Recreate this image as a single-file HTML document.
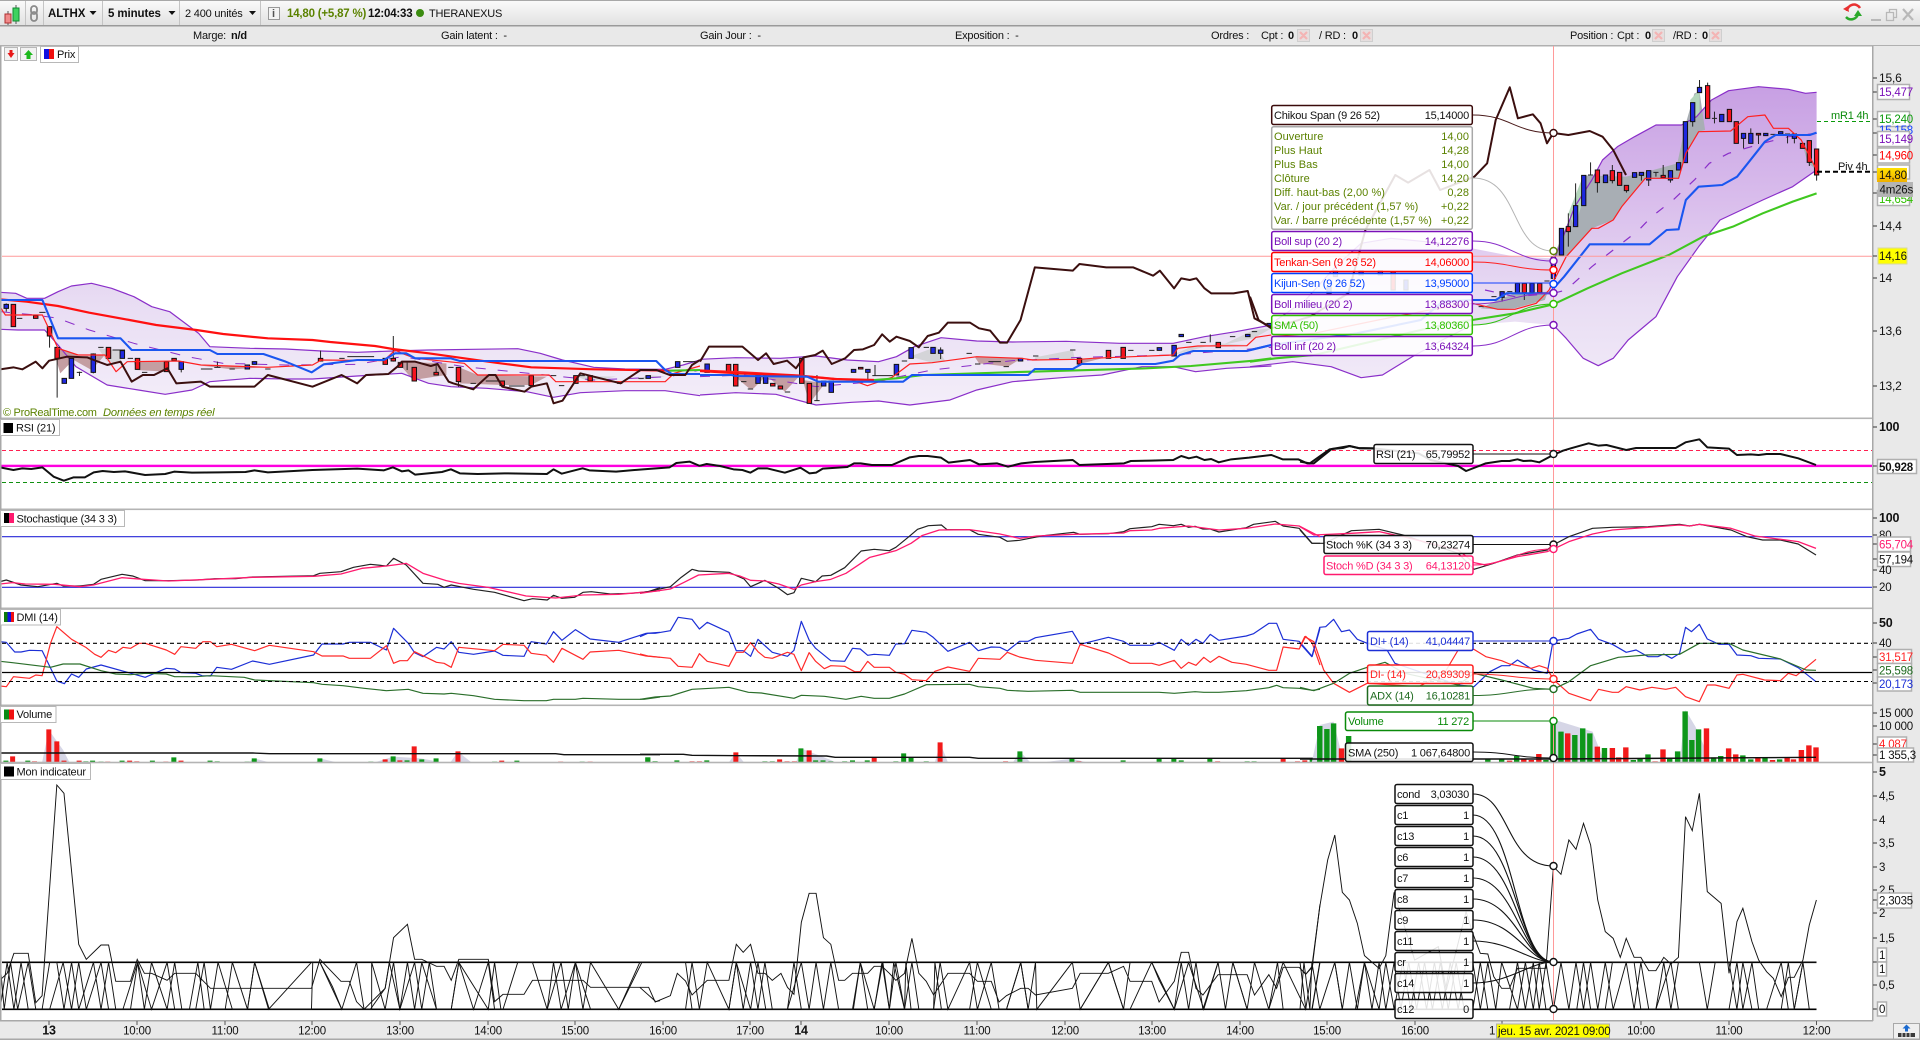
<!DOCTYPE html>
<html lang="fr"><head><meta charset="utf-8"><title>ProRealTime ALTHX</title>
<style>
html,body{margin:0;padding:0;background:#fff;width:1920px;height:1040px;overflow:hidden}
svg{display:block}
text{font:11px "Liberation Sans",Arial,sans-serif;fill:#111;letter-spacing:-.2px;dominant-baseline:auto}
.b{font-weight:bold}
.e{text-anchor:end}
.n *{vector-effect:non-scaling-stroke}
.l{fill:none;stroke-linejoin:round}
.box{fill:#fff;fill-opacity:.88;stroke-width:1.5}
.ax{fill:#fff;stroke:#b0b0b0;stroke-width:1.5}
.c{fill:#fff;stroke-width:1.4}
.k{stroke:#222;stroke-width:1;fill:none}
.r{fill:#f5141e;stroke:#111;stroke-width:1}
.u{fill:#1f28e0;stroke:#111;stroke-width:1}
.sep{fill:#b4b4b4}
.hd{fill:#fff;stroke:#b8b8b8}
.zz{fill:none;stroke:#111;stroke-width:.95;stroke-linejoin:miter}
.i{fill:#5b8200;letter-spacing:.05px}
</style></head><body>
<svg width="1920" height="1040" viewBox="0 0 1920 1040" xmlns="http://www.w3.org/2000/svg">
<defs>
<linearGradient id="tb" x1="0" y1="0" x2="0" y2="1"><stop offset="0" stop-color="#fbfbfb"/><stop offset="1" stop-color="#e2e2e2"/></linearGradient>
<linearGradient id="gold" x1="0" y1="0" x2="0" y2="1"><stop offset="0" stop-color="#ffe000"/><stop offset="1" stop-color="#f0b000"/></linearGradient>
<linearGradient id="g3" gradientUnits="userSpaceOnUse" x1="0" y1="-555" x2="0" y2="390"><stop offset="0" stop-color="#c79fe3"/><stop offset=".365" stop-color="#d9bdec"/><stop offset=".68" stop-color="#e8dcf3"/><stop offset="1" stop-color="#f3edf9"/></linearGradient>
<linearGradient id="g4" gradientUnits="userSpaceOnUse" x1="0" y1="-465" x2="0" y2="480"><stop offset="0" stop-color="#c79fe3"/><stop offset=".365" stop-color="#d9bdec"/><stop offset=".68" stop-color="#e8dcf3"/><stop offset="1" stop-color="#f3edf9"/></linearGradient>
<linearGradient id="g2" gradientUnits="userSpaceOnUse" x1="0" y1="255" x2="0" y2="1200"><stop offset="0" stop-color="#c79fe3"/><stop offset=".365" stop-color="#d9bdec"/><stop offset=".68" stop-color="#e8dcf3"/><stop offset="1" stop-color="#f3edf9"/></linearGradient>
</defs>
<rect width="1920" height="1040" fill="#fff"/>

<!-- toolbar -->
<rect x="0" y="0" width="1920" height="25" fill="url(#tb)"/>
<rect x="0" y="0" width="1920" height="1" fill="#a8a8a8"/>
<rect x="0" y="25" width="1920" height="1.5" fill="#9a9a9a"/>
<rect x="0" y="26.5" width="1920" height="19" fill="#e9e9e9"/>
<rect x="0" y="45" width="1920" height="1.5" fill="#b0b0b0"/>
<path d="M25.5 1V25M43.5 1V25M102.5 1V25M179.5 1V25M260.5 1V25" stroke="#c4c4c4" fill="none"/>
<path d="M8 12V26M16 6V25" stroke="#555" stroke-width="1" transform="translate(0,-1)"/>
<rect x="5" y="14" width="6" height="9" fill="#f08a8a" stroke="#b03030"/>
<rect x="13" y="8" width="6" height="13" fill="#3fd25f" stroke="#108a30"/>
<g fill="none" stroke="#8a8a8a" stroke-width="1.8"><rect x="31" y="6" width="6" height="8" rx="3"/><rect x="31" y="12" width="6" height="9" rx="3"/></g>
<text x="48" y="17" class="b" style="font-size:11.5px;letter-spacing:0">ALTHX</text>
<path d="M89.5 11h7l-3.500 4z" fill="#111"/>
<text x="108" y="17" class="b" style="font-size:11.5px;letter-spacing:-.1px">5 minutes</text>
<path d="M168.5 11h7l-3.500 4z" fill="#111"/>
<text x="185" y="17" style="font-size:11px">2 400 unités</text>
<path d="M249 11h7l-3.500 4z" fill="#111"/>
<rect x="268.5" y="7.5" width="11" height="12" fill="#f4f4f4" stroke="#999"/>
<text x="272" y="17" style="fill:#555;font-weight:bold">i</text>
<text x="287" y="17" class="b" style="fill:#5b8200;font-size:11.5px">14,80 (+5,87 %)</text>
<text x="368" y="17" class="b" style="font-size:11.5px">12:04:33</text>
<circle cx="420" cy="13" r="4" fill="#3c8c10"/>
<text x="429" y="17" style="font-size:11px">THERANEXUS</text>

<!-- window controls -->
<path d="M1860 8A7 7 0 0 0 1847 11" fill="none" stroke="#e83030" stroke-width="2.5"/><path d="M1843 9l5 -3l1 6z" fill="#e83030"/>
<path d="M1846 17A7 7 0 0 0 1858 14" fill="none" stroke="#2aa82a" stroke-width="2.5"/><path d="M1854 16l4 -6l4 6z" fill="#2aa82a"/>
<path d="M1871 20h10" stroke="#b8b8b8" stroke-width="2"/>
<path d="M1886.5 12.500h7v8h-7zM1889.500 12.500v-3h7v8h-3" fill="none" stroke="#b8b8b8" stroke-width="1.3"/>
<path d="M1903 9l10 11M1913 9l-10 11" stroke="#b8b8b8" stroke-width="2.2"/>

<!-- row 2 -->
<g>
<text x="193" y="39">Marge:</text><text x="231" y="39" class="b">n/d</text>
<text x="441" y="39">Gain latent :&#160; -</text>
<text x="700" y="39">Gain Jour :&#160; -</text>
<text x="955" y="39">Exposition :&#160; -</text>
<text x="1211" y="39">Ordres :</text>
<text x="1261" y="39">Cpt :</text><text x="1288" y="39" class="b">0</text>
<text x="1319" y="39">/ RD :</text><text x="1352" y="39" class="b">0</text>
<text x="1570" y="39">Position :</text>
<text x="1617" y="39">Cpt :</text><text x="1645" y="39" class="b">0</text>
<text x="1673" y="39">/RD :</text><text x="1702" y="39" class="b">0</text>
</g>
<g fill="#e6dede" stroke="#cfcfcf">
<rect x="1297.5" y="29.5" width="12" height="12"/><rect x="1360.5" y="29.5" width="12" height="12"/><rect x="1652.5" y="29.5" width="12" height="12"/><rect x="1709.5" y="29.5" width="12" height="12"/>
</g>
<path d="M1300 32l7 7M1307 32l-7 7M1363 32l7 7M1370 32l-7 7M1655 32l7 7M1662 32l-7 7M1712 32l7 7M1719 32l-7 7" stroke="#f4b4b4" stroke-width="2.2"/>

<!-- pane horizontal lines -->
<path d="M2 450.5H1872" stroke="#ff2050" stroke-dasharray="4 3" fill="none"/>
<path d="M2 482.5H1872" stroke="#109010" stroke-dasharray="4 3" fill="none"/>

<!-- ============ PRICE PANE ============ -->
<g class="n">
<!-- z3 -->
<g transform="translate(0 270) scale(.44643 .33333)">
<polygon fill="url(#g3)" points="0,67 35,70 60,85 100,85 130,65 160,48 205,40 250,55 300,80 340,110 380,125 420,165 445,190 470,230 560,235 640,237 720,243 800,247 880,243 960,240 1060,238 1160,236 1210,250 1260,270 1330,292 1400,297 1490,298 1530,285 1568,270 1568,377 1490,362 1400,362 1300,368 1240,382 1180,365 1090,355 1010,350 960,340 900,310 800,318 700,327 640,327 560,325 470,335 430,360 370,373 310,360 240,345 170,290 130,225 100,180 40,180 0,178"/>
<g fill="#c49ea2"><polygon points="130,235 175,255 135,310 125,265"/><polygon points="155,262 235,255 205,300 185,285"/><polygon points="300,275 375,275 370,305 305,300"/><polygon points="890,275 1000,280 1000,315 925,330"/><polygon points="1025,290 1070,315 1225,320 1190,345 1125,345 1030,340"/><polygon points="450,287 590,292 520,298"/></g>
<g fill="#d4d4d8"><polygon points="220,235 270,242 270,280 240,275"/><polygon points="1290,318 1380,320 1320,335"/><polygon points="1450,315 1490,320 1430,330"/></g>
<polyline class="l" stroke="#8a2fc9" stroke-width="1.2" points="0,67 35,70 60,85 100,85 130,65 160,48 205,40 250,55 300,80 340,110 380,125 420,165 445,190 470,230 560,235 640,237 720,243 800,247 880,243 960,240 1060,238 1160,236 1210,250 1260,270 1330,292 1400,297 1490,298 1530,285 1568,270"/>
<polyline class="l" stroke="#8a2fc9" stroke-width="1.2" points="0,178 40,180 100,180 130,225 170,290 240,345 310,360 370,373 430,360 470,335 560,325 640,327 700,327 800,318 900,310 960,340 1010,350 1090,355 1180,365 1240,382 1300,368 1400,362 1490,362 1568,377"/>
<polyline class="l" stroke="#8a2fc9" stroke-width="1" stroke-dasharray="10 12" points="0,125 80,135 130,145 200,180 300,220 420,260 500,280 640,285 800,283 900,260 1040,290 1200,312 1330,330 1500,320 1568,300"/>
<path class="k" d="M14 100V125M30 103V170M111 170V233M128 232V383M178 305V318M209 250V310M406 275V307M487 275V292M718 242V275M881 198V275M912 278V300M977 283V315M1027 292V350M1190 317V350M1125 333V350M38 145h12M88 127h14M172 307h12M220 232h12M252 240h28M286 265h12M318 307h12M450 297h26M480 292h14M514 297h12M594 297h12M760 265h12M778 260h60M1004 292h12M1054 340h12M1088 333h28M1140 348h35M1234 317h12M1252 347h12M1298 317h12M1382 340h12M1430 325h12M1530 275h28"/>
<path class="r" d="M25 103h10V170h-10zM75 137h10V145h-10zM106 170h10V198h-10zM123 232h10V265h-10zM238 232h10V265h-10zM303 265h10V298h-10zM368 275h10V305h-10zM385 265h10V272h-10zM713 265h10V273h-10zM858 265h10V283h-10zM876 265h10V273h-10zM892 278h10V292h-10zM923 292h10V333h-10zM972 307h10V315h-10zM1022 292h10V335h-10zM1120 333h10V347h-10zM1185 317h10V347h-10zM1285 317h10V340h-10zM1317 317h10V333h-10z"/>
<path class="u" d="M9 103h10V115h-10zM139 325h10V340h-10zM155 265h10V325h-10zM204 252h10V307h-10zM269 242h10V265h-10zM401 275h10V298h-10zM549 285h10V297h-10zM565 275h10V283h-10zM1447 317h10V325h-10zM1513 275h10V292h-10z"/>
<polyline class="l" stroke="#ff2020" stroke-width="1.2" points="0,110 12,135 95,135 130,235 175,255 235,255 260,305 285,275 400,273 450,285 600,292 700,285 720,270 860,272 885,240 900,250 930,265 1040,280 1070,315 1230,315 1245,335 1490,335 1510,310 1568,288"/>
<polyline class="l" stroke="#ff1010" stroke-width="2.2" points="0,88 60,95 130,108 200,128 290,150 350,165 440,180 500,192 600,205 700,210 740,216 840,228 880,237 960,250 1040,265 1110,278 1190,292 1330,298 1500,302"/>
<polyline class="l" stroke="#40c820" stroke-width="2.1" points="1500,302 1568,300"/>
<polyline class="l" stroke="#1a56f0" stroke-width="2.1" points="0,90 95,90 130,205 270,205 295,240 470,240 487,252 590,252 640,275 698,307 725,283 800,270 860,270 885,250 910,250 930,265 1010,265 1030,273 1470,273 1490,300 1505,312 1568,312"/>
<polyline class="l" stroke="#3b0f0f" stroke-width="2" points="0,298 30,292 50,298 80,275 95,295 110,272 150,260 195,262 210,270 240,285 270,275 295,335 320,315 345,315 375,295 395,340 450,335 470,350 570,350 600,315 700,350 765,315 800,340 820,315 870,312 890,290 900,275 930,275 965,288 980,282 1005,335 1015,340 1060,358 1095,315 1110,315 1125,350 1175,365 1190,350 1225,340 1240,400 1260,392 1300,310 1390,340 1435,300 1470,300 1500,315 1535,315 1550,285 1568,270"/>
</g>
<!-- z4 -->
<g transform="translate(700 240) scale(.44643 .33333)">
<polygon fill="url(#g4)" points="0,358 80,353 180,355 260,348 330,360 400,365 440,350 480,320 540,293 620,303 700,306 820,304 940,310 1060,310 1130,290 1200,275 1280,255 1280,378 1180,385 1110,395 1060,380 990,380 900,405 820,412 700,425 620,450 560,480 470,495 400,483 340,487 260,495 170,463 80,458 0,465"/>
<g fill="#c49ea2"><polygon points="70,400 150,405 120,445 110,445"/><polygon points="150,408 225,405 190,455"/><polygon points="230,420 280,430 245,490"/><polygon points="615,350 720,355 690,380 625,370"/><polygon points="850,358 900,355 850,372"/></g>
<g fill="#d4d4d8"><polygon points="470,350 530,320 550,365 520,368"/><polygon points="750,352 835,330 840,358 750,360"/><polygon points="1060,345 1160,310 1225,315 1100,320"/><polygon points="1170,315 1240,270 1280,265 1240,295"/></g>
<polyline class="l" stroke="#8a2fc9" stroke-width="1.2" points="0,358 80,353 180,355 260,348 330,360 400,365 440,350 480,320 540,293 620,303 700,306 820,304 940,310 1060,310 1130,290 1200,275 1280,255"/>
<polyline class="l" stroke="#8a2fc9" stroke-width="1.2" points="0,465 80,458 170,463 260,495 340,487 400,483 470,495 560,480 620,450 700,425 820,412 900,405 990,380 1060,380 1110,395 1180,385 1280,378"/>
<polyline class="l" stroke="#8a2fc9" stroke-width="1" stroke-dasharray="10 12" points="0,410 100,405 260,440 390,425 520,390 700,362 850,352 1060,345 1280,322"/>
<path class="k" d="M80 373V438M245 430V490M262 405V482M539 322V357M376 388V420M392 375V407M1143 283V307M228 355V430M473 323V355M1062 316V348M92 425h12M107 447h12M190 456h12M256 482h12M386 407h46M452 363h12M501 322h12M597 340h12M616 372h12M646 365h28M680 380h12M746 348h12M829 330h12M959 331h12M1006 331h12M1089 307h12M1121 307h12M1187 290h12M1236 275h12"/>
<path class="r" d="M59 373h10V397h-10zM75 373h10V438h-10zM158 430h10V438h-10zM175 438h10V447h-10zM223 355h10V430h-10zM240 430h10V490h-10zM355 382h10V387h-10zM845 355h10V372h-10zM910 331h10V355h-10zM943 322h10V355h-10zM1156 307h10V323h-10z"/>
<path class="u" d="M11 372h10V397h-10zM125 407h10V430h-10zM142 407h10V430h-10zM272 423h10V438h-10zM289 423h10V457h-10zM339 388h10V397h-10zM371 388h10V397h-10zM435 373h10V405h-10zM468 323h10V355h-10zM517 322h10V340h-10zM534 330h10V340h-10zM713 355h10V363h-10zM1024 323h10V331h-10zM1057 316h10V348h-10zM1073 283h10V290h-10zM1222 283h10V290h-10zM1270 250h10V258h-10z"/>
<polyline class="l" stroke="#ff2020" stroke-width="1.2" points="0,390 90,395 220,405 340,420 375,437 430,412 470,372 520,368 620,350 720,355 745,360 850,358 880,355 1060,345 1070,325 1115,318 1225,317 1245,292 1280,285"/>
<polyline class="l" stroke="#ff1010" stroke-width="2.2" points="0,393 60,398 130,402 220,407 300,417 390,420"/>
<polyline class="l" stroke="#40c820" stroke-width="2.1" points="390,420 440,415 500,405 740,395 1000,385 1100,378 1240,362 1280,355"/>
<polyline class="l" stroke="#1a56f0" stroke-width="2.1" points="0,405 70,405 80,408 240,410 265,425 455,425 475,405 735,405 750,387 835,387 855,372 1020,372 1060,362 1075,345 1105,333 1225,333 1280,315"/>
<polyline class="l" stroke="#3b0f0f" stroke-width="2" points="0,365 20,320 95,320 130,360 148,340 165,372 195,362 215,385 232,352 258,345 275,332 295,372 325,355 345,330 365,328 390,315 408,283 425,305 440,290 470,303 490,322 510,288 535,278 555,248 605,248 625,265 650,272 672,308 688,308 718,240 750,82 835,92 850,72 910,82 970,82 1015,107 1030,92 1062,145 1078,115 1097,120 1112,115 1130,145 1145,160 1195,160 1227,153 1242,235 1280,262"/>
</g>
<!-- z2 -->
<g transform="translate(1250 0) scale(.4273 .33333)">
<polygon fill="url(#g2)" points="50,970 130,900 200,800 260,730 330,715 450,730 520,745 620,770 710,775 730,720 760,620 800,540 825,480 860,440 900,410 950,375 1010,375 1045,350 1080,300 1120,272 1190,260 1260,268 1300,280 1326,277 1326,510 1270,560 1200,600 1100,660 1050,740 1000,830 950,950 885,1020 850,1075 815,1097 780,1075 740,1015 710,975 620,965 520,975 450,1020 380,1070 310,1125 260,1133 190,1100 100,1085 50,1090"/>
<g fill="#a8aeb4"><polygon points="710,770 760,620 780,526 880,530 930,515 1000,490 1020,370 1040,280 1052,275 1065,390 1050,395 1020,460 1003,535 925,535 870,620 850,660 800,685 740,770"/><polygon points="540,925 580,900 620,880 700,875 710,830 690,900 620,925 580,928"/><polygon points="1290,420 1326,510 1305,488"/></g>
<g fill="#b4d6bc"><polygon points="745,640 780,526 780,600 760,680"/><polygon points="1030,300 1052,270 1052,340 1035,365"/></g>
<polyline class="l" stroke="#8a2fc9" stroke-width="1.2" points="50,970 130,900 200,800 260,730 330,715 450,730"/>
<polyline class="l" stroke="#8a2fc9" stroke-width="1.2" points="710,785 730,720 760,620 800,540 825,480 860,440 900,410 950,375 1010,375 1045,350 1080,300 1120,272 1190,260 1260,268 1300,280 1326,277"/>
<polyline class="l" stroke="#8a2fc9" stroke-width="1.2" points="0,1100 100,1085 190,1100 260,1133 310,1125 380,1070 450,1020 520,975"/>
<polyline class="l" stroke="#8a2fc9" stroke-width="1.2" points="710,975 740,1015 780,1075 815,1097 850,1075 885,1020 950,950 1000,830 1050,740 1100,660 1200,600 1270,560 1326,510"/>
<polyline class="l" stroke="#8a2fc9" stroke-width="1.2" stroke-dasharray="9 13" points="710,880 740,870 800,800 850,750 910,690 940,650 990,600 1040,540 1075,490 1120,460 1200,430 1260,410 1326,400"/>
<polyline class="l" stroke="#8a2fc9" stroke-width="1.2" stroke-dasharray="9 13" points="550,870 620,890 710,880"/>
<path class="k" d="M590 875V905M642 850V900M710 770V835M745 640V740M762 550V680M797 487V525M813 510V578M848 495V550M881 556V578M916 517V542M933 512V558M950 517V530M967 495V533M984 512V548M1036 308V380M1052 240V278M1071 248V355M1087 335V370M1155 400V445M1172 385V430M1190 400V432M1258 402V430M1274 402V430M1309 422V498M1326 447V542M565 890h12M602 875h12M689 843h12M791 525h12M944 517h12M1081 355h12M1218 403h12M1252 402h12M535 920h12"/>
<path class="r" d="M740 680h10V695h-10zM808 510h10V548h-10zM843 512h10V542h-10zM860 517h10V556h-10zM876 556h10V572h-10zM962 526h10V533h-10zM1066 257h10V355h-10zM1117 328h10V365h-10zM1133 365h10V430h-10zM1185 400h10V405h-10zM1288 430h10V445h-10zM1304 422h10V487h-10zM1321 447h10V525h-10zM637 850h10V878h-10zM673 850h10V878h-10zM330 815h10V870h-10z"/>
<path class="u" d="M585 875h10V892h-10zM621 850h10V878h-10zM655 850h10V878h-10zM705 770h10V835h-10zM724 685h10V765h-10zM757 617h10V680h-10zM776 526h10V617h-10zM827 525h10V548h-10zM895 518h10V532h-10zM911 517h10V526h-10zM928 512h10V540h-10zM979 512h10V540h-10zM998 488h10V510h-10zM1014 365h10V488h-10zM1031 308h10V365h-10zM1047 262h10V278h-10zM1099 343h10V365h-10zM1150 400h10V415h-10zM1167 400h10V430h-10zM1202 400h10V407h-10zM1237 395h10V402h-10zM1269 402h10V415h-10zM195 812h10V830h-10zM255 812h10V825h-10zM300 812h10V825h-10zM360 840h10V870h-10zM180 860h10V880h-10z"/>
<polyline class="l" stroke="#ff2020" stroke-width="1.2" points="50,1010 150,1000 300,960 420,930 520,910 580,928 620,928 670,910 700,870 740,770 800,685 815,685 850,660 870,620 925,535 1003,535 1020,460 1050,395 1125,393 1165,350 1205,345 1225,385 1260,385 1290,420 1326,510"/>
<polyline class="l" stroke="#40c820" stroke-width="2.1" points="0,1085 60,1075 150,1065 300,1020 450,975 520,960 620,940 710,913 790,865 870,820 980,765 1060,710 1130,680 1200,640 1270,605 1326,580"/>
<polyline class="l" stroke="#1a56f0" stroke-width="2.1" points="0,1050 50,1035 250,1000 400,960 450,905 520,900 575,900 600,880 700,880 735,830 795,733 935,733 975,690 1003,688 1020,600 1050,560 1105,555 1140,530 1165,490 1205,425 1230,405 1310,405 1326,398"/>
<polyline class="l" stroke="#3b0f0f" stroke-width="2" points="0,890 20,960 50,985 140,950 230,880 270,690 340,525 370,548 420,510 445,570 525,530 555,490 575,360 608,262 627,355 662,343 680,370 695,430 710,399 745,405 795,393 825,410 850,450 880,525"/>
</g>
</g>

<path d="M1817 121.5H1872" stroke="#0a9a0a" stroke-dasharray="4 3" fill="none"/>
<path d="M1817 171.7H1872" stroke="#000" stroke-width="2" stroke-dasharray="5 3" fill="none"/>
<text x="1831" y="119" style="fill:#0a8a0a">mR1 4h</text>
<text x="1838" y="170">Piv 4h</text>

<!-- RSI -->
<g class="n">
<rect x="0" y="464.7" width="1872" height="2.4" fill="#ff00e0"/>
<polyline class="l" transform="translate(0 270) scale(.44643 .33333)" stroke="#111" stroke-width="2" points="0,592 30,600 50,595 70,597 95,592 120,620 143,632 165,622 190,622 210,607 230,603 255,606 280,604 325,615 370,612 390,605 430,608 490,607 550,606 570,601 600,607 700,600 800,596 860,601 880,592 900,604 915,601 930,614 990,606 1010,598 1030,610 1070,612 1130,610 1225,612 1240,598 1258,611 1305,595 1320,601 1380,605 1440,598 1500,592 1515,579 1545,575 1568,588"/>
<polyline class="l" transform="translate(700 240) scale(.44643 .33333)" stroke="#111" stroke-width="2" points="0,677 15,672 45,678 75,688 95,690 113,698 130,685 150,685 190,698 225,683 245,700 260,698 275,686 330,681 345,670 360,670 385,675 430,675 470,652 490,648 510,648 540,653 557,668 605,660 625,673 665,670 690,680 720,670 750,666 835,660 850,675 950,670 965,663 1010,662 1060,660 1078,648 1095,655 1112,650 1130,660 1145,657 1162,667 1190,658 1230,653 1280,645 1305,658 1340,658 1360,670 1375,670 1415,627 1440,624 1455,618 1475,624 1510,625"/>
<polyline class="l" transform="translate(1300 410) scale(.39541 .33333)" stroke="#111" stroke-width="2" points="0,155 25,160 75,118 125,108 150,115 185,115 300,130 330,150 400,168 420,183 470,160 510,153 530,153 550,148 565,153 585,152 605,157 640,135 665,122 685,115 730,100 755,107 775,105 825,120 850,114 950,114 975,97 1010,88 1030,112 1085,116 1105,135 1140,133 1160,135 1180,132 1215,132 1260,145 1305,165"/>
</g>

<!-- Stoch -->
<path d="M2 536.7H1872M2 587.3H1872" stroke="#2828d8" stroke-width="1.2" fill="none"/>
<g class="n">
<g transform="translate(0 500) scale(.42092 .33333)">
<polyline class="l" stroke="#222" stroke-width="1.2" points="0,245 15,240 50,255 90,260 135,250 150,258 190,258 222,253 240,238 290,223 315,228 345,242 400,242 470,240 510,236 560,236 600,231 745,227 760,220 810,215 840,202 880,193 918,198 935,175 965,195 1005,250 1040,253 1055,262 1072,255 1125,268 1175,277 1245,302 1265,296 1300,300 1315,286 1335,295 1365,292 1385,277 1405,275 1450,282 1500,280 1540,275 1568,263"/>
<polyline class="l" stroke="#ff1a6e" stroke-width="1.3" points="0,252 30,248 60,252 130,253 190,260 222,255 290,233 340,238 400,243 500,238 600,232 745,229 810,222 860,205 918,198 965,190 1005,220 1060,242 1090,250 1160,262 1250,288 1320,294 1385,285 1470,283 1568,272"/>
<polyline class="l" stroke="#1c2fd6" stroke-width="1.2" points="0,425 15,427 35,456 50,456 70,451 100,452 135,543 153,551 170,522 187,532 205,507 240,495 345,532 395,505 415,507 430,518 465,520 480,527 500,528 515,502 550,508 600,483 640,493 745,465 765,432 815,432 830,427 880,427 918,450 935,385 970,430 985,458 1005,470 1037,442 1055,447 1072,425 1090,457 1125,463 1175,453 1195,466 1245,469 1262,425 1298,432 1315,395 1335,421 1367,389 1402,417 1470,427 1535,400 1568,397"/>
<polyline class="l" stroke="#ff2a2a" stroke-width="1.2" points="0,558 15,560 32,530 70,535 85,525 100,527 120,430 135,380 170,418 205,443 225,463 240,472 258,451 275,458 292,442 310,445 330,430 345,430 395,450 415,463 430,440 465,445 482,425 500,425 515,440 550,433 605,452 640,436 745,455 765,468 815,468 830,475 880,475 918,437 935,490 950,482 968,482 985,455 1037,487 1055,490 1072,502 1090,442 1175,452 1195,433 1245,436 1262,460 1298,466 1315,487 1335,445 1385,478 1402,456 1470,451 1535,468 1568,472"/>
<polyline class="l" stroke="#2a6e2a" stroke-width="1.2" points="0,484 30,488 120,502 150,492 190,492 240,512 275,522 310,524 345,520 395,522 415,530 465,530 500,527 580,532 605,540 745,548 765,553 815,557 865,565 918,572 970,568 1005,580 1055,582 1072,580 1125,587 1175,598 1245,602 1298,602 1315,598 1367,598 1385,595 1470,598 1530,598 1568,591"/>
</g>
<g transform="translate(640 500) scale(.43367 .33333)">
<polyline class="l" stroke="#222" stroke-width="1.2" points="0,280 70,260 95,232 120,208 135,213 205,217 240,237 255,260 288,241 320,265 340,284 355,278 372,235 405,245 420,228 440,226 472,203 510,153 540,148 575,152 590,142 620,110 640,88 665,77 695,75 708,89 760,89 780,103 830,112 847,124 875,121 930,107 1000,97 1015,103 1080,101 1115,95 1130,86 1180,80 1197,73 1230,77 1248,73 1265,82 1280,79 1298,87 1315,87 1335,96 1398,83 1415,73 1465,64 1483,78 1520,85 1550,130 1568,130"/>
<polyline class="l" stroke="#ff1a6e" stroke-width="1.3" points="0,280 70,267 100,248 135,225 205,220 230,228 255,241 288,243 320,252 355,268 372,255 405,245 440,238 475,220 530,172 590,152 625,130 650,107 690,90 760,89 830,102 875,115 915,108 1000,103 1115,99 1130,92 1180,90 1197,85 1265,78 1335,90 1398,85 1465,72 1520,78 1568,110"/>
<polyline class="l" stroke="#1c2fd6" stroke-width="1.2" points="0,410 18,400 35,400 70,392 88,352 120,358 137,387 155,367 205,397 222,452 238,452 255,469 272,418 305,457 340,469 355,451 372,364 390,420 405,445 440,482 472,484 490,445 508,447 525,466 540,463 575,466 590,432 610,431 627,391 660,397 675,411 710,454 760,427 780,452 810,441 830,442 847,453 875,424 895,424 912,413 997,394 1015,433 1080,412 1115,424 1130,436 1180,436 1197,427 1232,451 1248,418 1265,436 1282,418 1298,430 1315,403 1335,421 1398,408 1415,401 1450,370 1468,370 1483,418 1520,424 1550,469 1568,385"/>
<polyline class="l" stroke="#ff2a2a" stroke-width="1.2" points="0,462 18,468 70,475 88,499 120,502 137,461 155,484 205,499 222,457 238,457 255,428 272,455 288,472 305,475 340,457 355,463 372,512 390,458 405,484 425,506 440,497 472,499 495,515 508,515 525,484 540,502 575,502 590,517 610,523 627,539 660,542 680,514 710,501 760,514 780,475 830,478 847,457 875,471 912,481 997,490 1015,433 1080,459 1130,490 1180,490 1197,496 1232,481 1248,505 1265,487 1282,496 1300,472 1315,487 1335,469 1365,487 1398,493 1450,511 1468,511 1483,441 1520,447 1535,409 1550,429 1568,495"/>
<polyline class="l" stroke="#2a6e2a" stroke-width="1.2" points="0,598 35,591 70,588 120,568 205,562 250,577 280,579 355,595 372,586 425,589 475,598 510,589 540,595 575,595 610,582 660,554 760,553 780,560 830,565 847,571 895,574 997,571 1015,577 1197,577 1232,580 1280,575 1300,577 1335,577 1398,572 1450,563 1468,556 1483,563 1520,565 1550,571 1568,568"/>
</g>
<g transform="translate(1300 410) scale(.39541 .33333)">
<polyline class="l" stroke="#222" stroke-width="1.2" points="0,360 30,400 60,400 130,362 200,358 260,375 400,430 440,478 490,460 550,435 625,420 640,405 680,380 740,355 790,352 880,350 960,343 985,348 1010,343 1090,360 1130,380 1170,390 1215,390 1260,402 1305,435"/>
<polyline class="l" stroke="#ff1a6e" stroke-width="1.3" points="0,350 35,375 130,370 200,365 260,380 400,420 440,458 470,465 550,440 625,425 640,418 680,395 740,372 790,360 880,352 960,345 985,348 1010,343 1090,355 1150,378 1215,388 1260,395 1305,415"/>
<polyline class="l" stroke="#1c2fd6" stroke-width="1.2" points="0,700 30,740 50,652 65,650 85,628 105,665 125,660 145,688 170,700 220,720 240,760 400,825 440,830 480,785 510,767 530,767 550,750 590,780 625,790 640,693 680,685 700,672 735,658 755,688 790,703 825,727 850,720 880,740 905,740 920,732 940,745 960,730 975,652 990,665 1010,643 1030,687 1060,703 1085,703 1105,735 1140,737 1160,745 1215,747 1260,773 1305,815"/>
<polyline class="l" stroke="#ff2a2a" stroke-width="1.2" points="0,710 12,680 35,695 60,780 85,820 125,847 170,820 300,830 365,790 400,720 440,718 470,740 510,752 530,762 585,775 605,767 625,775 640,808 680,850 735,872 755,838 790,847 805,847 825,830 860,840 890,832 925,838 950,832 975,860 1010,875 1030,825 1050,825 1085,835 1105,795 1120,793 1175,810 1215,812 1235,790 1255,797 1305,748"/>
<polyline class="l" stroke="#2a6e2a" stroke-width="1.2" points="0,832 35,842 85,820 125,790 170,772 215,757 265,790 400,825 440,790 510,810 590,835 640,838 680,815 735,767 805,742 875,735 960,733 1010,700 1085,700 1120,720 1215,747 1280,780 1305,781"/>
</g>
</g>
<path d="M2 643.3H1872M2 681.5H1872" stroke="#000" stroke-width="1.1" stroke-dasharray="4 3" fill="none"/>
<path d="M2 672.5H1872" stroke="#000" stroke-width="1.3" fill="none"/>

<!-- Volume -->
<g class="n">
<g transform="translate(0 500) scale(.42092 .33333)">
<g fill="#d6d6e6"><polygon points="100,787 116,690 150,750 165,787"/><polygon points="890,787 934,770 1000,775 1050,787"/><polygon points="1070,787 1088,755 1120,787"/><polygon points="590,787 604,775 640,787"/><polygon points="750,787 760,775 800,787"/></g>
<path fill="none" stroke="#0e961a" stroke-width="5" d="M14 782V787M66 782V787M204 784V787M220 782V787M240 785V787M290 782V787M362 782V787M413 772V787M499 782V787M516 784V787M587 785V787M604 775V787M760 775V787M881 785V787M934 769V787M967 781V787M1002 778V787M1036 775V787M1175 785V787M1228 782V787M1383 785V787M1539 772V787M1556 784V787"/>
<path fill="none" stroke="#f21a1a" stroke-width="5" d="M30 769V787M82 784V787M116 688V787M135 724V787M152 782V787M188 782V787M256 785V787M308 782V787M325 784V787M394 785V787M430 782V787M915 778V787M950 781V787M984 739V787M1088 754V787M1192 782V787M1332 785V787M1402 785V787"/>
<polyline class="l" stroke="#111" stroke-width="1.4" points="0,759 600,759 640,761 1320,761 1340,764 1568,764"/>
</g>
<g transform="translate(640 500) scale(.43367 .33333)">
<g fill="#d6d6e6"><polygon points="205,787 221,757 240,787"/><polygon points="360,787 371,745 440,780 450,787"/><polygon points="680,787 692,727 710,787"/><polygon points="860,787 876,754 900,787"/><polygon points="930,787 996,776 1030,787"/></g>
<path fill="none" stroke="#0e961a" stroke-width="5" d="M18 772V787M35 784V787M85 781V787M154 781V787M288 784V787M305 784V787M371 745V787M405 781V787M422 781V787M440 784V787M472 784V787M490 781V787M524 781V787M590 784V787M608 760V787M625 773V787M660 784V787M876 754V787M996 776V787M1114 781V787M1197 776V787M1231 776V787M1248 781V787M1314 776V787M1400 784V787M1416 784V787M1550 776V787M1567 679V787"/>
<path fill="none" stroke="#f21a1a" stroke-width="5" d="M120 784V787M137 784V787M221 757V787M322 778V787M339 784V787M356 784V787M390 751V787M540 773V787M692 727V787M843 784V787M1012 784V787M1332 784V787M1483 776V787M1516 784V787M1533 781V787"/>
<polyline class="l" stroke="#111" stroke-width="1.4" points="0,763 100,763 120,766 230,767 430,768 450,772 760,772 780,775 1568,775"/>
</g>
<g transform="translate(1300 410) scale(.39541 .33333)">
<g fill="#d6d6e6"><polygon points="30,1056 50,945 85,935 110,1056"/><polygon points="630,1056 645,930 740,965 770,1056"/><polygon points="960,1056 975,900 1000,950 1040,1056"/></g>
<path fill="none" stroke="#0e961a" stroke-width="5.4" d="M50 948V1056M68 957V1056M85 940V1056M123 978V1056M475 1046V1056M510 1046V1056M548 1038V1056M622 1050V1056M640 935V1056M660 965V1056M695 975V1056M715 955V1056M733 970V1056M770 1014V1056M843 1050V1056M860 1046V1056M880 1033V1056M935 1046V1056M955 1024V1056M974 904V1056M991 990V1056M1008 958V1056M1046 1042V1056M1064 1038V1056M1120 1036V1056M1140 1048V1056M1176 1043V1056M1213 1048V1056"/>
<path fill="none" stroke="#f21a1a" stroke-width="5.4" d="M105 1015V1056M530 1052V1056M566 1046V1056M585 1050V1056M604 1032V1056M677 970V1056M752 1010V1056M790 1014V1056M806 1042V1056M824 1012V1056M898 1054V1056M918 1018V1056M1028 955V1056M1084 1015V1056M1102 1033V1056M1158 1043V1056M1195 1050V1056M1232 1043V1056M1248 1048V1056M1268 1020V1056M1287 1006V1056M1305 1012V1056"/>
<polyline class="l" stroke="#111" stroke-width="1.4" points="0,1047 640,1047 1305,1042"/>
</g>
</g>

<!-- Indicator -->
<path d="M2 962.3H1816.5M2 1009.3H1816.5" stroke="#000" stroke-width="1.7" fill="none"/>
<g class="n">
<g transform="translate(0 760) scale(.42092 .33333)">
<polyline class="zz" points="0,748 17,607 33,748 50,607 67,748 100,748 118,607 135,607 152,748 170,607 187,748 222,607 240,748 258,607 275,748 310,748 327,607 343,748 360,607 397,748 415,607 432,748 465,748 485,607 500,748 518,607 552,748 588,748 605,607 638,748 740,607 760,607 812,748 847,607 865,748 883,748 883,607 915,748 935,607 950,748 968,607 985,748 1002,607 1037,748 1072,748 1090,607 1125,748 1160,607 1175,748 1195,748 1230,607 1265,607 1300,748 1315,607 1333,748 1367,607 1385,748 1403,607 1470,748 1525,607 1568,607"/>
<polyline class="zz" points="0,607 10,748 25,607 42,748 67,607 85,748 118,748 150,607 170,748 187,607 205,748 240,607 258,748 292,748 327,607 360,748 397,607 415,748 450,748 470,607 485,748 535,748 552,607 588,748 605,607 640,748 740,748 743,607 760,607 790,680 812,748 880,748 915,685 925,607 950,748 985,607 1002,748 1020,607 1037,748 1072,748 1090,607 1160,748 1175,607 1190,748 1300,748 1333,607 1350,748 1367,607 1403,748 1470,748 1520,607"/>
<polyline class="zz" points="0,660 17,640 33,580 67,580 85,728 100,707 135,75 152,100 187,553 205,598 240,555 258,555 275,664 310,664 326,598 343,640 360,640 397,661 415,640 465,640 500,685 740,685 760,598 810,664 830,664 847,725 865,748 915,685 935,533 968,493 985,598 1002,598 1037,619 1055,619 1072,661 1090,598 1160,598 1175,725 1195,703 1245,703 1265,661 1385,661 1403,682 1520,682 1558,725 1568,722"/>
</g>
<g transform="translate(640 760) scale(.43367 .33333)">
<polyline class="zz" points="0,607 105,607 120,748 137,748 155,607 205,748 222,607 238,748 255,607 272,748 288,607 305,748 340,748 355,607 372,748 390,748 406,607 423,748 440,607 458,748 490,748 508,607 525,748 540,748 558,607 575,748 590,607 610,748 627,607 643,748 677,748 692,607 710,748 760,607 778,748 810,607 828,748 845,748 878,607 895,748 912,607 915,748 997,607 1015,748 1080,607 1115,748 1130,607 1180,607 1232,748 1248,607 1265,748 1282,607 1298,748 1333,607 1350,748 1367,607 1400,748 1417,607 1450,748 1470,607 1483,748 1535,748 1550,748 1568,607"/>
<polyline class="zz" points="0,748 105,748 120,607 137,748 205,748 222,607 255,748 272,607 290,748 340,748 372,607 390,748 492,748 508,607 540,748 560,607 575,748 585,607 610,748 613,607 625,748 677,748 680,607 695,748 760,748 778,607 810,748 845,748 878,607 895,748 1015,748 1080,607 1115,748 1130,748 1180,607 1197,660 1232,748 1265,607 1300,748 1333,607 1367,607 1400,748 1450,748 1483,607 1535,748 1552,607"/>
<polyline class="zz" points="0,682 20,682 35,726 70,707 86,640 105,663 120,705 155,661 205,661 222,553 238,577 255,553 272,640 288,640 305,661 325,640 340,682 355,703 372,487 390,400 406,400 423,533 440,553 458,661 472,661 490,640 525,640 540,619 558,619 575,640 590,661 610,640 627,535 643,640 660,664 677,705 710,640 760,640 778,664 810,664 828,726 845,707 878,685 895,685 912,705 997,685 1015,640 1080,640 1115,619 1130,664 1180,664 1197,726 1232,664 1248,577 1265,577 1282,685 1298,705 1333,644 1400,644 1417,705 1450,644 1468,685 1483,622 1520,622 1535,643 1550,622 1568,433"/>
</g>
<g transform="translate(1300 760) scale(.39541 .33333)">
<polyline class="zz" points="0,607 15,748 30,748 50,607 88,607 107,748 125,607 145,748 163,607 182,748 200,607 217,748 238,607 255,748 275,607 295,748 315,607 335,748 355,607 375,748 395,607 415,748 437,748 456,607 475,748 530,748 550,607 570,748 590,607 605,748 622,607 641,748 660,607 680,748 698,607 717,748 735,607 753,748 772,607 792,748 825,607 845,748 862,607 882,748 900,748 920,607 938,748 957,607 1010,607 1030,748 1050,607 1085,607 1105,748 1120,607 1143,748 1180,748 1217,607 1235,748 1250,748 1272,607 1288,748"/>
<polyline class="zz" points="0,748 10,607 25,748 30,607 50,748 88,607 107,748 140,748 163,607 200,748 217,607 238,748 260,607 280,748 300,607 320,748 340,607 360,748 380,607 400,748 420,607 437,607 456,748 475,607 495,748 510,607 550,748 570,607 590,748 605,607 622,748 641,748 700,748 717,607 735,748 772,748 790,607 845,607 862,748 900,748 938,607 957,748 1085,748 1105,607 1120,748 1143,607 1160,748 1217,748 1235,607 1250,748 1272,607 1306,607"/>
<polyline class="zz" points="0,625 15,642 30,620 50,440 70,300 88,225 107,397 125,420 145,490 163,587 200,625 217,587 238,397 290,600 350,560 370,690 420,455 437,520 456,580 475,582 490,650 510,685 530,685 550,625 622,625 641,320 660,343 680,240 698,268 717,190 735,255 753,420 772,515 792,535 810,592 825,535 845,592 862,592 882,632 900,632 920,592 938,612 957,592 975,170 992,212 1010,100 1030,395 1065,430 1085,640 1105,485 1120,445 1143,545 1160,600 1180,635 1197,655 1217,710 1235,652 1250,652 1272,600 1288,495 1306,420"/>
</g>
</g>

<!-- crosshair -->
<path d="M2 256.3H1872" stroke="#ff9a9a" fill="none"/>
<path d="M1553.5 46V1020" stroke="#ff9a9a" fill="none"/>

<!-- separators -->
<rect x="0" y="417.5" width="1872" height="1.6" class="sep"/>
<rect x="0" y="508.5" width="1872" height="1.6" class="sep"/>
<rect x="0" y="607.5" width="1872" height="1.6" class="sep"/>
<rect x="0" y="704.5" width="1872" height="1.6" class="sep"/>
<rect x="0" y="761.7" width="1872" height="1.6" class="sep"/>
<rect x="0" y="46" width="1.5" height="975" fill="#a8a8a8"/>

<!-- connectors -->
<g fill="none" stroke-width="1">
<path stroke="#4a1a1a" d="M1473 115C1510 115 1515 133 1553 133"/>
<path stroke="#b4b4b4" d="M1473 178C1520 178 1510 251 1553 251"/>
<path stroke="#8a2fc9" d="M1473 241C1510 241 1515 261 1553 261"/>
<path stroke="#ff2020" d="M1473 262C1510 262 1515 270 1553 270"/>
<path stroke="#1040ff" d="M1473 283H1553"/>
<path stroke="#8a2fc9" d="M1473 304C1510 304 1515 293 1553 293"/>
<path stroke="#30c010" d="M1473 325C1510 325 1515 304 1553 304"/>
<path stroke="#8a2fc9" d="M1473 346C1510 346 1515 325 1553 325"/>
<path stroke="#111" d="M1473 454H1553"/>
<path stroke="#111" d="M1473 544.5H1553"/>
<path stroke="#ff1a6e" d="M1473 565C1510 565 1515 549 1553 549"/>
<path stroke="#1c2fd6" d="M1473 641H1553"/>
<path stroke="#ff2a2a" d="M1473 674C1510 674 1515 679 1553 679"/>
<path stroke="#2a6e2a" d="M1473 695.5C1510 695.5 1515 689 1553 689"/>
<path stroke="#0a8a0a" d="M1473 721H1553"/>
<path stroke="#111" d="M1473 752C1510 752 1515 758 1553 758"/>
<g stroke="#111" stroke-width="1.1">
<path d="M1473 794C1510 794 1505 866 1553 866"/>
<path d="M1473 815C1515 815 1515 962 1553 962"/>
<path d="M1473 836C1515 836 1518 962 1553 962"/>
<path d="M1473 857C1515 857 1520 962 1553 962"/>
<path d="M1473 878C1515 878 1522 962 1553 962"/>
<path d="M1473 899C1515 899 1525 962 1553 962"/>
<path d="M1473 920C1515 920 1528 962 1553 962"/>
<path d="M1473 941C1510 941 1530 962 1553 962"/>
<path d="M1473 962H1553"/>
<path d="M1473 983C1510 983 1530 962 1553 962"/>
<path d="M1473 1009H1553"/>
</g>
</g>

<!-- price boxes -->
<g>
<rect x="1271.7" y="105.5" width="200.6" height="19" rx="2" class="box" stroke="#3a0a0a"/>
<text x="1274" y="119">Chikou Span (9 26 52)</text><text x="1469" y="119" class="e">15,14000</text>
<rect x="1271.7" y="126.7" width="200.6" height="102.6" rx="2" class="box" stroke="#a8a8a8"/>
<text x="1274" y="140" class="i">Ouverture</text><text x="1469" y="140" class="e i">14,00</text>
<text x="1274" y="154" class="i">Plus Haut</text><text x="1469" y="154" class="e i">14,28</text>
<text x="1274" y="168" class="i">Plus Bas</text><text x="1469" y="168" class="e i">14,00</text>
<text x="1274" y="182" class="i">Clôture</text><text x="1469" y="182" class="e i">14,20</text>
<text x="1274" y="196" class="i">Diff. haut-bas (2,00 %)</text><text x="1469" y="196" class="e i">0,28</text>
<text x="1274" y="210" class="i">Var. / jour précédent (1,57 %)</text><text x="1469" y="210" class="e i">+0,22</text>
<text x="1274" y="224" class="i">Var. / barre précédente (1,57 %)</text><text x="1469" y="224" class="e i">+0,22</text>
<rect x="1271.7" y="231.5" width="200.6" height="19" rx="2" class="box" stroke="#7a10b8"/>
<text x="1274" y="245" style="fill:#7a10b8">Boll sup (20 2)</text><text x="1469" y="245" class="e" style="fill:#7a10b8">14,12276</text>
<rect x="1271.7" y="252.5" width="200.6" height="19" rx="2" class="box" stroke="#ff0000"/>
<text x="1274" y="266" style="fill:#f00">Tenkan-Sen (9 26 52)</text><text x="1469" y="266" class="e" style="fill:#f00">14,06000</text>
<rect x="1271.7" y="273.5" width="200.6" height="19" rx="2" class="box" stroke="#0040ff"/>
<text x="1274" y="287" style="fill:#0040ff">Kijun-Sen (9 26 52)</text><text x="1469" y="287" class="e" style="fill:#0040ff">13,95000</text>
<rect x="1271.7" y="294.5" width="200.6" height="19" rx="2" class="box" stroke="#7a10b8"/>
<text x="1274" y="308" style="fill:#7a10b8">Boll milieu (20 2)</text><text x="1469" y="308" class="e" style="fill:#7a10b8">13,88300</text>
<rect x="1271.7" y="315.5" width="200.6" height="19" rx="2" class="box" stroke="#2fc000"/>
<text x="1274" y="329" style="fill:#2fc000">SMA (50)</text><text x="1469" y="329" class="e" style="fill:#2fc000">13,80360</text>
<rect x="1271.7" y="336.5" width="200.6" height="19" rx="2" class="box" stroke="#7a10b8"/>
<text x="1274" y="350" style="fill:#7a10b8">Boll inf (20 2)</text><text x="1469" y="350" class="e" style="fill:#7a10b8">13,64324</text>
</g>
<!-- sub boxes -->
<rect x="1374" y="444.5" width="99" height="19" rx="2" class="box" stroke="#111"/>
<text x="1376" y="458">RSI (21)</text><text x="1470" y="458" class="e">65,79952</text>
<rect x="1324" y="535.5" width="149" height="18" rx="2" class="box" stroke="#111"/>
<text x="1326" y="548.5">Stoch %K (34 3 3)</text><text x="1470" y="548.5" class="e">70,23274</text>
<rect x="1324" y="556" width="149" height="18.5" rx="2" class="box" stroke="#ff1a6e"/>
<text x="1326" y="569.5" style="fill:#ff1a6e">Stoch %D (34 3 3)</text><text x="1470" y="569.5" class="e" style="fill:#ff1a6e">64,13120</text>
<rect x="1367.5" y="631.5" width="105.5" height="19" rx="2" class="box" stroke="#1c2fd6"/>
<text x="1370" y="645" style="fill:#1c2fd6">DI+ (14)</text><text x="1470" y="645" class="e" style="fill:#1c2fd6">41,04447</text>
<rect x="1367.5" y="665" width="105.5" height="18.5" rx="2" class="box" stroke="#ff2020"/>
<text x="1370" y="678" style="fill:#f22">DI- (14)</text><text x="1470" y="678" class="e" style="fill:#f22">20,89309</text>
<rect x="1367.5" y="686" width="105.5" height="19" rx="2" class="box" stroke="#1f6a1f"/>
<text x="1370" y="699.5" style="fill:#1f6a1f">ADX (14)</text><text x="1470" y="699.5" class="e" style="fill:#1f6a1f">16,10281</text>
<rect x="1345.5" y="712" width="127.5" height="18.5" rx="2" class="box" stroke="#0a8a0a"/>
<text x="1348" y="725" style="fill:#0a8a0a">Volume</text><text x="1469" y="725" class="e" style="fill:#0a8a0a">11 272</text>
<rect x="1345.5" y="743" width="127.5" height="18.5" rx="2" class="box" stroke="#111"/>
<text x="1348" y="756.5">SMA (250)</text><text x="1470" y="756.5" class="e">1 067,64800</text>

<!-- indicator boxes -->
<g stroke="#111">
<rect x="1395" y="784.5" width="78" height="19" rx="2" class="box"/>
<rect x="1395" y="805.5" width="78" height="19" rx="2" class="box"/>
<rect x="1395" y="826.5" width="78" height="19" rx="2" class="box"/>
<rect x="1395" y="847.5" width="78" height="19" rx="2" class="box"/>
<rect x="1395" y="868.5" width="78" height="19" rx="2" class="box"/>
<rect x="1395" y="889.5" width="78" height="19" rx="2" class="box"/>
<rect x="1395" y="910.5" width="78" height="19" rx="2" class="box"/>
<rect x="1395" y="931.5" width="78" height="19" rx="2" class="box"/>
<rect x="1395" y="952.5" width="78" height="19" rx="2" class="box"/>
<rect x="1395" y="973.5" width="78" height="19" rx="2" class="box"/>
<rect x="1395" y="999.5" width="78" height="19" rx="2" class="box"/>
</g>
<text x="1397" y="798">cond</text><text x="1469" y="798" class="e">3,03030</text>
<text x="1397" y="819">c1</text><text x="1469" y="819" class="e">1</text>
<text x="1397" y="840">c13</text><text x="1469" y="840" class="e">1</text>
<text x="1397" y="861">c6</text><text x="1469" y="861" class="e">1</text>
<text x="1397" y="882">c7</text><text x="1469" y="882" class="e">1</text>
<text x="1397" y="903">c8</text><text x="1469" y="903" class="e">1</text>
<text x="1397" y="924">c9</text><text x="1469" y="924" class="e">1</text>
<text x="1397" y="945">c11</text><text x="1469" y="945" class="e">1</text>
<text x="1397" y="966">cr</text><text x="1469" y="966" class="e">1</text>
<text x="1397" y="987">c14</text><text x="1469" y="987" class="e">1</text>
<text x="1397" y="1013">c12</text><text x="1469" y="1013" class="e">0</text>

<!-- circles -->
<g>
<circle cx="1553.5" cy="133" r="3.5" class="c" stroke="#3a0a0a"/>
<circle cx="1553.5" cy="251" r="3.5" class="c" stroke="#5b8200"/>
<circle cx="1553.5" cy="261" r="3.5" class="c" stroke="#7a10b8"/>
<circle cx="1553.5" cy="270" r="3.5" class="c" stroke="#f00"/>
<circle cx="1553.5" cy="284" r="3.5" class="c" stroke="#0040ff"/>
<circle cx="1553.5" cy="293" r="3.5" class="c" stroke="#7a10b8"/>
<circle cx="1553.5" cy="304" r="3.5" class="c" stroke="#2fc000"/>
<circle cx="1553.5" cy="325" r="3.5" class="c" stroke="#7a10b8"/>
<circle cx="1553.5" cy="454" r="3.5" class="c" stroke="#111"/>
<circle cx="1553.5" cy="544.5" r="3.5" class="c" stroke="#111"/>
<circle cx="1553.5" cy="549" r="3.5" class="c" stroke="#ff1a6e"/>
<circle cx="1553.5" cy="641" r="3.5" class="c" stroke="#1c2fd6"/>
<circle cx="1553.5" cy="679" r="3.5" class="c" stroke="#f22"/>
<circle cx="1553.5" cy="689" r="3.5" class="c" stroke="#1f6a1f"/>
<circle cx="1553.5" cy="721" r="3.5" class="c" stroke="#0a8a0a"/>
<circle cx="1553.5" cy="758" r="3.5" class="c" stroke="#111"/>
<circle cx="1553.5" cy="866" r="3.5" class="c" stroke="#111"/>
<circle cx="1553.5" cy="962" r="3.5" class="c" stroke="#111"/>
<circle cx="1553.5" cy="1009" r="3.5" class="c" stroke="#111"/>
</g>

<!-- pane header chips -->
<rect x="4.5" y="47.5" width="13" height="13" fill="#f2f2f2" stroke="#b8b8b8"/>
<path d="M8 53h2v-3h3v3h2l-3.500 5z" fill="#e81818" transform="translate(-.5,0)"/>
<rect x="20.5" y="47.5" width="16" height="13" fill="#f2f2f2" stroke="#b8b8b8"/>
<path d="M28.5 50l4.500 5h-2.500v4h-4v-4h-2.500z" fill="#1cb81c"/>
<rect x="40.5" y="46.5" width="38" height="16" class="hd"/>
<rect x="44" y="49" width="5" height="10" fill="#1010e0"/><rect x="49" y="49" width="5" height="10" fill="#f01010"/>
<text x="57" y="58">Prix</text>

<rect x="0.5" y="419.5" width="59" height="16" class="hd"/>
<rect x="3.5" y="423" width="9.5" height="10" fill="#000"/>
<text x="16" y="431.5">RSI (21)</text>

<rect x="0.5" y="510.5" width="124" height="16" class="hd"/>
<rect x="4" y="513" width="5" height="10" fill="#000"/><rect x="9" y="513" width="5" height="10" fill="#ff1a6e"/>
<text x="16.5" y="522.5">Stochastique (34 3 3)</text>

<rect x="0.5" y="609.5" width="60" height="15.5" class="hd"/>
<rect x="4" y="612" width="3.5" height="10" fill="#0a7a0a"/><rect x="7.5" y="612" width="3.5" height="10" fill="#1010e0"/><rect x="11" y="612" width="3" height="10" fill="#f01010"/>
<text x="16.5" y="621">DMI (14)</text>

<rect x="0.5" y="706.5" width="55.5" height="16" class="hd"/>
<rect x="4" y="709.5" width="5" height="10" fill="#0a8a14"/><rect x="9" y="709.5" width="5" height="10" fill="#f01010"/>
<text x="16.5" y="718">Volume</text>

<rect x="0.5" y="763.5" width="90" height="16" class="hd"/>
<rect x="4" y="766.5" width="10" height="10" fill="#000"/>
<text x="16.5" y="775.5">Mon indicateur</text>

<text x="3" y="416" style="fill:#5b8200;letter-spacing:-.3px">© ProRealTime.com</text>
<text x="103" y="416" style="fill:#5b8200;font-style:italic;font-size:11.2px">Données en temps réel</text>

<!-- right axis -->
<rect x="1873" y="46" width="47" height="994" fill="#e9e9e9"/>
<rect x="1872" y="46" width="1.5" height="975" fill="#a8a8a8"/>
<rect x="0" y="1021" width="1920" height="18" fill="#e9e9e9"/>
<rect x="0" y="1020" width="1873" height="1.5" fill="#a8a8a8"/>
<rect x="0" y="1038.5" width="1920" height="1.5" fill="#a8a8a8"/>

<path d="M1873 78h4M1873 92h4M1873 119h4M1873 133h4M1873 155h4M1873 172h4M1873 193h4M1873 226h4M1873 256h4M1873 278h4M1873 331h4M1873 386h4M1873 427h4M1873 466h4M1873 518h4M1873 535h4M1873 544h4M1873 559h4M1873 570h4M1873 587h4M1873 623h4M1873 643h4M1873 657h4M1873 670h4M1873 683h4M1873 713h4M1873 726h4M1873 744h4M1873 755h4M1873 772h4M1873 796h4M1873 820h4M1873 843h4M1873 867h4M1873 890h4M1873 900h4M1873 913h4M1873 938h4M1873 962h4M1873 985h4M1873 1009h4" stroke="#333" fill="none"/>

<g>
<text x="1879" y="82" style="font-size:12px">15,6</text>
<text x="1879" y="230" style="font-size:12px">14,4</text>
<text x="1879" y="282" style="font-size:12px">14</text>
<text x="1879" y="335" style="font-size:12px">13,6</text>
<text x="1879" y="390" style="font-size:12px">13,2</text>
</g>
<rect x="1877.5" y="84.5" width="32" height="15" class="ax"/><text x="1879" y="96" style="fill:#7a10b8;font-size:11.5px">15,477</text>
<rect x="1877.5" y="111.5" width="32" height="15" class="ax"/><text x="1879" y="123" style="fill:#0a9a0a;font-size:11.5px">15,240</text>
<text x="1879" y="134" style="fill:#1040ff;font-size:11.5px">15,158</text>
<rect x="1877.5" y="131.5" width="32" height="15" class="ax"/><text x="1879" y="143" style="fill:#7a10b8;font-size:11.5px">15,149</text>
<rect x="1877.5" y="148" width="32" height="15" class="ax"/><text x="1879" y="159.5" style="fill:#f00;font-size:11.5px">14,960</text>
<rect x="1877.5" y="165" width="32" height="14" class="ax"/>
<rect x="1877.5" y="190.5" width="32" height="15" class="ax"/><text x="1879" y="203" style="fill:#2fc000;font-size:11.5px">14,654</text>
<rect x="1877" y="168" width="30" height="14" fill="url(#gold)"/><text x="1879" y="179" style="font-size:11.5px">14,80</text>
<rect x="1878" y="182" width="35" height="15" fill="#b4b4b4"/><text x="1879.5" y="193.5" style="font-size:11.5px">4m26s</text>
<rect x="1878" y="248" width="29" height="16" fill="#ffff00" stroke="#d8d8a0"/><text x="1879" y="260" style="font-size:11.5px">14,16</text>

<text x="1879" y="431" class="b" style="font-size:12.5px">100</text>
<rect x="1877.5" y="459.5" width="39" height="14" class="ax"/><text x="1879" y="471" class="b" style="font-size:11.5px">50,928</text>
<text x="1879" y="522" class="b" style="font-size:12.5px">100</text>
<text x="1879" y="539" style="font-size:11.5px">80</text>
<rect x="1877.5" y="537" width="33" height="14.5" class="ax"/><text x="1879" y="548.5" style="fill:#ff1a6e;font-size:11.5px">65,704</text>
<rect x="1877.5" y="552" width="33" height="14.5" class="ax"/><text x="1879" y="563.5" style="font-size:11.5px">57,194</text>
<text x="1879" y="574" style="font-size:11.5px">40</text>
<text x="1879" y="591" style="font-size:11.5px">20</text>
<text x="1879" y="627" class="b" style="font-size:12.5px">50</text>
<text x="1879" y="647" style="font-size:11.5px">40</text>
<rect x="1877.5" y="649.5" width="34" height="14" class="ax"/><text x="1879" y="661" style="fill:#f22;font-size:11.5px">31,517</text>
<rect x="1877.5" y="663.5" width="34" height="13.5" class="ax"/><text x="1879" y="674.5" style="fill:#1f6a1f;font-size:11.5px">25,598</text>
<rect x="1877.5" y="677" width="34" height="14" class="ax"/><text x="1879" y="688" style="fill:#1c2fd6;font-size:11.5px">20,173</text>
<text x="1879" y="717" style="font-size:11.5px">15 000</text>
<text x="1879" y="730" style="font-size:11.5px">10 000</text>
<rect x="1877.5" y="737" width="29" height="14" class="ax"/><text x="1879" y="748" style="fill:#f22;font-size:11.5px">4 087</text>
<rect x="1877.5" y="748" width="36" height="14" class="ax"/><text x="1879" y="759" style="font-size:11.5px">1 355,3</text>
<text x="1879" y="776" class="b" style="font-size:12.5px">5</text>
<text x="1879" y="800" style="font-size:11.5px">4,5</text>
<text x="1879" y="824" style="font-size:11.5px">4</text>
<text x="1879" y="847" style="font-size:11.5px">3,5</text>
<text x="1879" y="871" style="font-size:11.5px">3</text>
<text x="1879" y="894" style="font-size:11.5px">2,5</text>
<rect x="1877.5" y="893" width="34" height="15" class="ax"/><text x="1879" y="904.5" style="font-size:11.5px">2,3035</text>
<text x="1879" y="917" style="font-size:11.5px">2</text>
<text x="1879" y="942" style="font-size:11.5px">1,5</text>
<rect x="1877.5" y="948" width="9" height="14" class="ax"/><text x="1879" y="959" style="font-size:11.5px">1</text>
<rect x="1877.5" y="962" width="9" height="14" class="ax"/><text x="1879" y="973" style="font-size:11.5px">1</text>
<text x="1879" y="989" style="font-size:11.5px">0,5</text>
<rect x="1877.5" y="1002" width="9" height="14" class="ax"/><text x="1879" y="1013" style="font-size:11.5px">0</text>

<!-- time axis -->
<path d="M49 1021v4M137 1021v4M225 1021v4M312 1021v4M400 1021v4M488 1021v4M575 1021v4M663 1021v4M750 1021v4M801 1021v4M889 1021v4M977 1021v4M1065 1021v4M1152 1021v4M1240 1021v4M1327 1021v4M1415 1021v4M1502 1021v4M1641 1021v4M1729 1021v4M1816.5 1021v4" stroke="#555" fill="none"/>
<g>
<text x="49" y="1034.5" class="b" style="text-anchor:middle;font-size:12.5px">13</text>
<text x="137" y="1034.5" style="text-anchor:middle;font-size:11.5px">10:00</text>
<text x="225" y="1034.5" style="text-anchor:middle;font-size:11.5px">11:00</text>
<text x="312" y="1034.5" style="text-anchor:middle;font-size:11.5px">12:00</text>
<text x="400" y="1034.5" style="text-anchor:middle;font-size:11.5px">13:00</text>
<text x="488" y="1034.5" style="text-anchor:middle;font-size:11.5px">14:00</text>
<text x="575" y="1034.5" style="text-anchor:middle;font-size:11.5px">15:00</text>
<text x="663" y="1034.5" style="text-anchor:middle;font-size:11.5px">16:00</text>
<text x="750" y="1034.5" style="text-anchor:middle;font-size:11.5px">17:00</text>
<text x="801" y="1034.5" class="b" style="text-anchor:middle;font-size:12.5px">14</text>
<text x="889" y="1034.5" style="text-anchor:middle;font-size:11.5px">10:00</text>
<text x="977" y="1034.5" style="text-anchor:middle;font-size:11.5px">11:00</text>
<text x="1065" y="1034.5" style="text-anchor:middle;font-size:11.5px">12:00</text>
<text x="1152" y="1034.5" style="text-anchor:middle;font-size:11.5px">13:00</text>
<text x="1240" y="1034.5" style="text-anchor:middle;font-size:11.5px">14:00</text>
<text x="1327" y="1034.5" style="text-anchor:middle;font-size:11.5px">15:00</text>
<text x="1415" y="1034.5" style="text-anchor:middle;font-size:11.5px">16:00</text>
<text x="1489" y="1034.5" style="font-size:11.5px">1</text>
<text x="1641" y="1034.5" style="text-anchor:middle;font-size:11.5px">10:00</text>
<text x="1729" y="1034.5" style="text-anchor:middle;font-size:11.5px">11:00</text>
<text x="1816.5" y="1034.5" style="text-anchor:middle;font-size:11.5px">12:00</text>
</g>
<rect x="1496.5" y="1024" width="113" height="14" fill="#ffff00" stroke="#b0b0b0"/>
<text x="1498" y="1035" style="font-size:11.5px">jeu. 15 avr. 2021 09:00</text>

<!-- bottom-right button -->
<rect x="1893.5" y="1023.5" width="26" height="15.5" fill="#efefef" stroke="#a8a8a8"/>
<path d="M1906.5 1024.5l4 4h-2.500v3h-3v-3h-2.500z" fill="#1a6ad0"/>
<path d="M1898 1033h17v4h-17z" fill="#3a3a3a"/>
<path d="M1902 1033v4M1906 1033v4M1910 1033v4" stroke="#efefef"/>
</svg>
</body></html>
